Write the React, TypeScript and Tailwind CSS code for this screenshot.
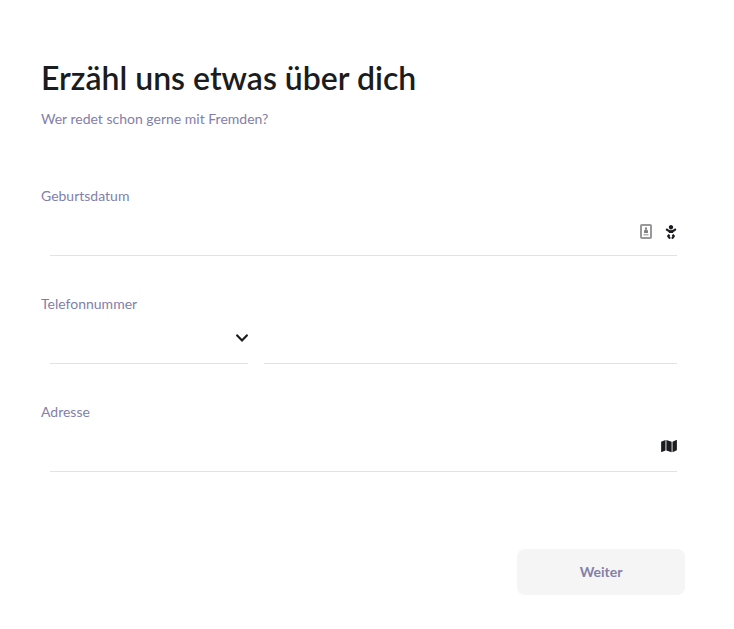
import React from 'react';
import { FaBaby, FaMap } from 'react-icons/fa';

const labelStyle = 'block text-sm leading-5 text-[#8280a8]';
const inputStyle = 'block h-[50px] w-full min-w-0 border-b border-[#e1e1e8] bg-transparent text-sm text-[#1b1c20] outline-none';

const ContactCardIcon = () => (
  <svg viewBox="0 0 12 15" className="h-[15px] w-3" fill="none" aria-hidden="true">
    <rect x="1" y="1" width="10" height="13" rx="0.8" stroke="#989898" strokeWidth="2" />
    <circle cx="6" cy="4.4" r="1.1" fill="#808080" />
    <path d="M4 9V7.4C4 6.2 4.8 5.2 6 5.2s2 1 2 2.2V9z" fill="#808080" />
    <path d="M3.5 10.7h5" stroke="#b0b0b0" strokeWidth="1.6" />
  </svg>
);

const ChevronIcon = () => (
  <svg viewBox="0 0 12 8" className="h-2 w-3" fill="none" aria-hidden="true">
    <path d="M1.2 1.4 6 6.4l4.8-5" stroke="#1b1c20" strokeWidth="2.2" strokeLinecap="round" strokeLinejoin="miter" />
  </svg>
);

const App = () => {
  const countryCodes = ['+49', '+43', '+41'];

  return (
    <main className="bg-white pt-14 pr-[49px] pb-8 pl-[41px] font-['Lato',sans-serif]">
      <h1 className="text-[32px] leading-11 font-semibold text-[#1b1c20]">Erzähl uns etwas über dich</h1>
      <p className="mt-[9px] text-sm leading-5 text-[#8280a8]">Wer redet schon gerne mit Fremden?</p>

      <form className="mt-[57px]">
        <div className="space-y-[38px]">
          {/* Date of birth */}
          <div>
            <label htmlFor="birthday" className={labelStyle}>Geburtsdatum</label>
            <div className="relative mr-2 ml-[9px]">
              <input id="birthday" type="text" className={inputStyle} />
              <div className="pointer-events-none absolute top-[18px] right-0 flex items-center gap-[13px] text-[#1b1c20]">
                <ContactCardIcon />
                <FaBaby className="h-[14px] w-3" />
              </div>
            </div>
          </div>

          {/* Phone number */}
          <div>
            <label htmlFor="phone" className={labelStyle}>Telefonnummer</label>
            <div className="mr-2 ml-[9px] flex gap-4">
              <div className="relative w-[198px] shrink-0">
                <select aria-label="Ländervorwahl" defaultValue="" className={`${inputStyle} appearance-none`}>
                  <option value="" />
                  {countryCodes.map((code) => (
                    <option key={code} value={code}>{code}</option>
                  ))}
                </select>
                <div className="pointer-events-none absolute top-5 right-0">
                  <ChevronIcon />
                </div>
              </div>
              <input id="phone" type="tel" className={`${inputStyle} flex-1`} />
            </div>
          </div>

          {/* Address */}
          <div>
            <label htmlFor="address" className={labelStyle}>Adresse</label>
            <div className="relative mr-2 ml-[9px]">
              <input id="address" type="text" className={inputStyle} />
              <FaMap className="pointer-events-none absolute top-[17px] right-0 h-[14px] w-4 text-[#1b1c20]" />
            </div>
          </div>
        </div>

        <div className="mt-[77px] flex justify-end">
          <button type="button" className="h-[46px] w-[168px] rounded-lg bg-[#f5f5f5] text-sm font-bold text-[#8280a8]">
            Weiter
          </button>
        </div>
      </form>
    </main>
  );
};

export default App;
